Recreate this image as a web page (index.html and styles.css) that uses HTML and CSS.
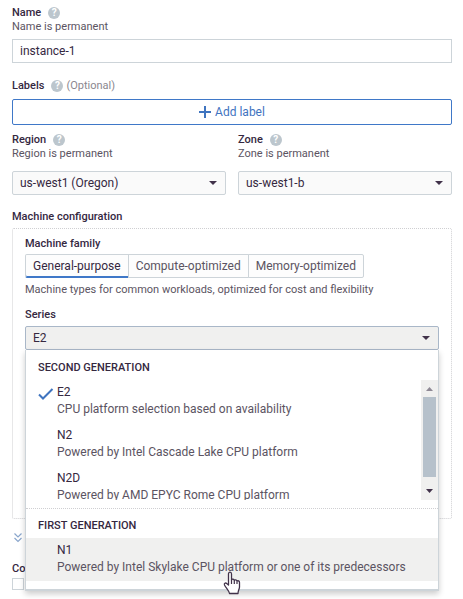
FILE: index.html
```html
<!DOCTYPE html>
<html lang="en">
<head>
<meta charset="utf-8">
<meta name="viewport" content="width=device-width, initial-scale=1">
<title>Create an instance</title>
<link rel="stylesheet" href="styles.css">
</head>
<body>
<form class="form">
  <div class="field">
    <div class="head"><label for="name">Name</label><span class="help">?</span></div>
    <div class="hint">Name is permanent</div>
    <input class="control" id="name" type="text" value="instance-1">
  </div>

  <div class="field labels">
    <div class="head"><span>Labels</span><span class="help">?</span><span class="optional">(Optional)</span></div>
    <button class="add" type="button">
      <svg width="12" height="12" viewBox="0 0 12 12" aria-hidden="true"><path d="M6 0v12M0 6h12" stroke="currentColor" stroke-width="2"/></svg>
      Add label
    </button>
  </div>

  <div class="columns">
    <div class="field">
      <div class="head"><label for="region">Region</label><span class="help">?</span></div>
      <div class="hint">Region is permanent</div>
      <select class="control" id="region"><option>us-west1 (Oregon)</option></select>
    </div>
    <div class="field">
      <div class="head"><label for="zone">Zone</label><span class="help">?</span></div>
      <div class="hint">Zone is permanent</div>
      <select class="control" id="zone"><option>us-west1-b</option></select>
    </div>
  </div>

  <h2 class="head section">Machine configuration</h2>
  <section class="panel">
    <h3 class="head">Machine family</h3>
    <div class="tabs">
      <button class="tab active" type="button">General-purpose</button>
      <button class="tab" type="button">Compute-optimized</button>
      <button class="tab" type="button">Memory-optimized</button>
    </div>
    <p class="hint about">Machine types for common workloads, optimized for cost and flexibility</p>
    <div class="head"><label for="series">Series</label></div>
    <div class="series">
      <select class="control open" id="series"><option>E2</option></select>
      <div class="menu">
        <h4 class="group">SECOND GENERATION</h4>
        <div class="scroller">
          <div class="options">
            <button class="option" type="button">
              <svg class="check" width="16" height="12" viewBox="0 0 16 12" aria-hidden="true"><path d="M1 6.5l4 4L14.500 1" fill="none" stroke="currentColor" stroke-width="2"/></svg>
              <span class="title">E2</span><span class="detail">CPU platform selection based on availability</span>
            </button>
            <button class="option" type="button"><span class="title">N2</span><span class="detail">Powered by Intel Cascade Lake CPU platform</span></button>
            <button class="option" type="button"><span class="title">N2D</span><span class="detail">Powered by AMD EPYC Rome CPU platform</span></button>
          </div>
          <div class="scrollbar">
            <svg width="17" height="17" viewBox="0 0 17 17" aria-hidden="true"><path d="M5 11h7L8.500 7z" fill="#8f8995"/></svg>
            <div class="thumb"></div>
            <svg width="17" height="17" viewBox="0 0 17 17" aria-hidden="true"><path d="M5 6h7L8.500 10z" fill="#41324a"/></svg>
          </div>
        </div>
        <h4 class="group first">FIRST GENERATION</h4>
        <button class="option hovered" type="button">
          <span class="title">N1</span><span class="detail">Powered by Intel Skylake CPU platform or one of its predecessors</span>
          <svg class="pointer" width="18" height="24" viewBox="0 0 18 24" aria-hidden="true"><path d="M5.500 14V3c0-2.500 3-2.500 3 0v6c.5-1.300 2.600-1 2.800.5.7-1.200 2.500-.8 2.700.7.900-.9 2.500-.3 2.500 1.300V16c0 2-1.500 3.500-1.500 6.500H6.500C6 19.500 3 17 1.500 14c-.7-1.600 1-2.700 2.200-1.500z" fill="#fff" stroke="#41324a" stroke-width="1.300" stroke-linejoin="round"/><path d="M8.500 9v4M11.300 9.500V13M14 10.500V13" stroke="#41324a" stroke-width="1.200"/></svg>
        </button>
      </div>
    </div>
  </section>

  <button class="expand" type="button" aria-expanded="false">
    <svg width="8" height="10" viewBox="0 0 8 10" aria-hidden="true"><path d="M.5.5L4 4 7.500.5M.5 5L4 8.500 7.500 5" fill="none" stroke="currentColor" stroke-width="1.200"/></svg>
  </button>
  <div class="head"><label for="container">Co</label></div>
  <input class="box" id="container" type="checkbox">
</form>
</body>
</html>
```
FILE: styles.css
```css
* { box-sizing: border-box; }

body {
  margin: 0;
  background: #fff;
  color: #35283f;
  font: 12px/14px Roboto, sans-serif;
}

button, input, select { font: inherit; color: inherit; margin: 0; }
h2, h3, h4, p { margin: 0; font: inherit; }

.form { padding: 6px 11px 10px 12px; }

.head {
  display: flex;
  align-items: center;
  height: 14px;
  font-size: 11px;
  font-weight: 500;
}

.help {
  width: 12px;
  height: 12px;
  margin-left: 7px;
  border-radius: 50%;
  background: #bcc6cd;
  color: #fff;
  font-size: 10px;
  line-height: 12px;
  font-weight: 700;
  text-align: center;
}

.optional { margin-left: 3px; color: #8b878f; font-weight: 400; }
.hint { color: #5b5462; font-size: 11px; }

.control {
  display: block;
  width: 100%;
  height: 24px;
  margin-top: 5px;
  padding: 0 7px;
  border: 1px solid #cdd4d9;
  border-radius: 0;
  background: #fff;
}

select.control {
  appearance: none;
  height: 24px;
  margin-top: 10px;
  border-radius: 2px;
  background: #fafafa url("data:image/svg+xml,%3Csvg xmlns='http://www.w3.org/2000/svg' width='8' height='4'%3E%3Cpath d='M0 0h8L4 4z' fill='%2341324a'/%3E%3C/svg%3E") no-repeat right 8px center;
}

.labels { margin-top: 16px; }

.add {
  display: flex;
  align-items: center;
  justify-content: center;
  gap: 4px;
  width: 100%;
  height: 26px;
  margin-top: 6px;
  border: 1px solid #3f78c8;
  border-radius: 2px;
  background: #fff;
  color: #3f74bf;
}

.columns {
  display: grid;
  grid-template-columns: 1fr 1fr;
  gap: 12px;
  margin-top: 8px;
}

.section { margin-top: 15px; }

.panel {
  margin-top: 4px;
  padding: 8px 12px 168px 12px;
  border: 1px dotted #cfcfd2;
  border-radius: 2px;
}

.tabs { display: flex; margin-top: 3px; }

.tab {
  height: 24px;
  margin-right: -1px;
  padding: 0 7px;
  border: 1px solid #cdd4d9;
  background: #fdfdfd;
  color: #5b5462;
}

.tab:first-child { border-radius: 2px 0 0 2px; }
.tab:last-child { border-radius: 0 2px 2px 0; }
.tab.active { color: #35283f; box-shadow: inset 0 -1px #3f78c8; border-bottom-color: #3f78c8; }

.about { margin: 5px 0 11px; }

.series { position: relative; margin-top: 4px; }

select.control.open { margin-top: 0; border-color: #a9b7c8; background-color: #f0f0ef; }

.menu {
  position: absolute;
  top: 100%;
  left: 0;
  right: 0;
  padding-bottom: 8px;
  border: 1px solid #cdd4d9;
  border-top: 0;
  border-bottom-width: 2px;
  background: #fff;
  box-shadow: 0 3px 6px rgba(0, 0, 0, 0.2);
}

.group {
  height: 30px;
  padding: 11px 12px 0;
  font-size: 11px;
  font-weight: 500;
}

.group.first { margin-top: 8px; padding-top: 10px; border-top: 1px dotted #cfcfd2; }

.scroller { display: flex; height: 120px; overflow: hidden; }
.options { flex: 1; }

.option {
  position: relative;
  display: block;
  width: 100%;
  height: 43px;
  padding: 4px 0 5px 31px;
  border: 0;
  background: none;
  text-align: left;
}

.option.hovered { background: #f0f0ef; }
.title, .detail { display: block; line-height: 17px; }
.detail { color: #5b5462; }

.check { position: absolute; left: 12px; top: 8px; color: #3f74bf; }
.pointer { position: absolute; left: 197px; top: 33px; z-index: 1; }

.scrollbar {
  display: flex;
  flex-direction: column;
  align-items: center;
  justify-content: space-between;
  width: 17px;
  background: #f0f0ef;
}

.thumb { width: 13px; height: 80px; margin-bottom: 6px; background: #b6c1cb; }
.scrollbar svg { flex: none; }

.expand {
  display: block;
  height: 14px;
  margin: 12px 0 17px;
  padding: 2px;
  border: 0;
  background: none;
  color: #8aa6cc;
}

.expand svg { display: block; }

.box {
  display: block;
  appearance: none;
  width: 12px;
  height: 12px;
  margin-top: 2px;
  border: 1px solid #cdd4d9;
}
```
